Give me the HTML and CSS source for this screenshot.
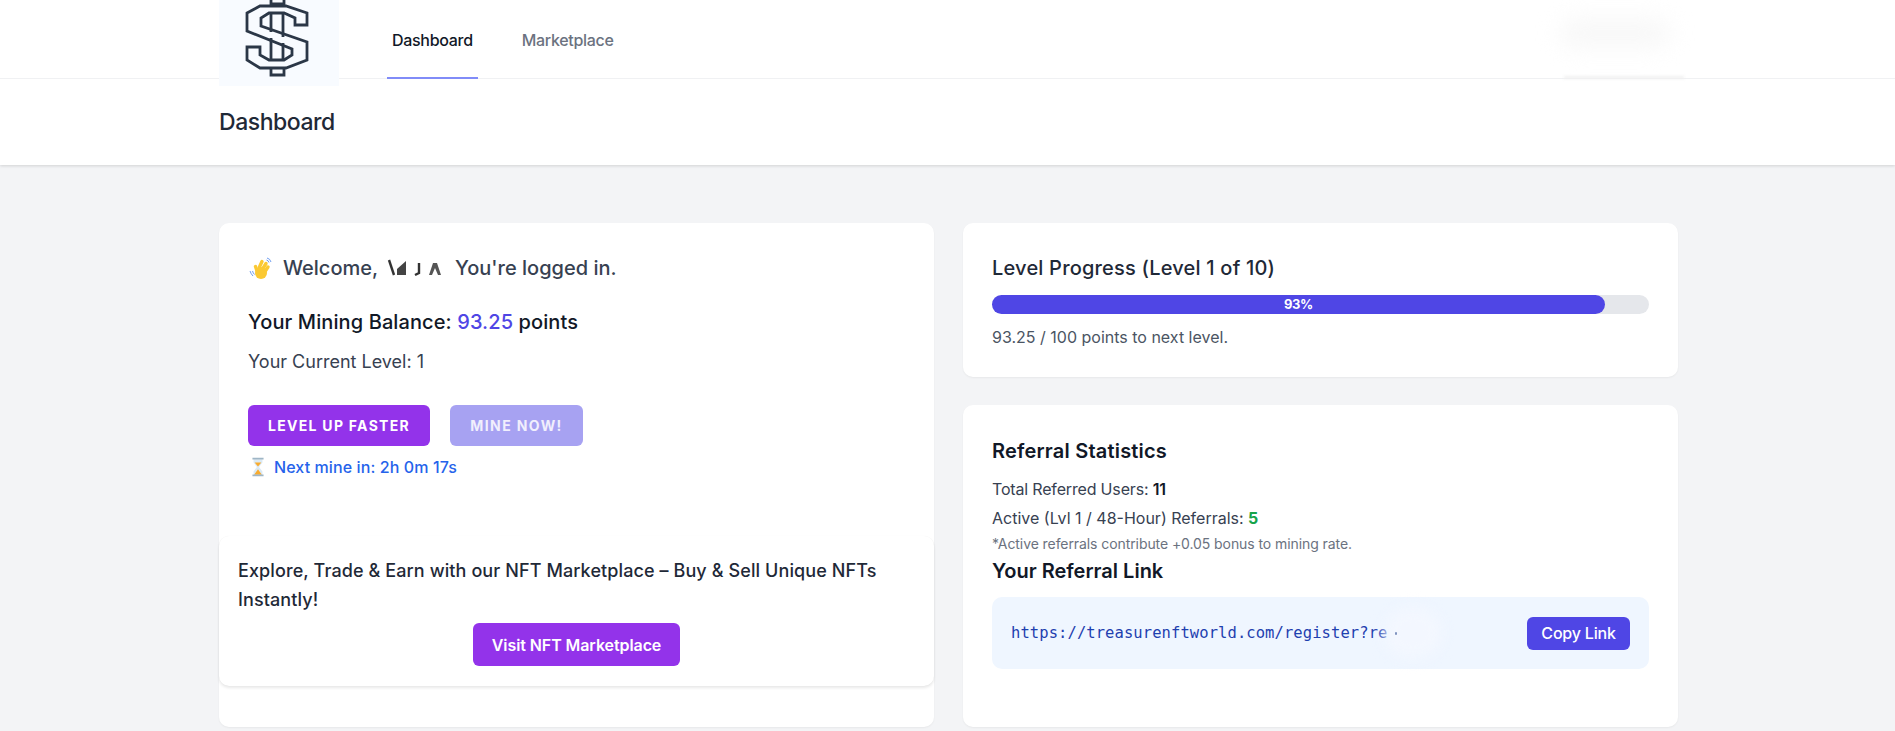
FILE: index.html
```html
<!DOCTYPE html>
<html lang="en">
<head>
<meta charset="utf-8">
<title>Dashboard</title>
<link rel="stylesheet" href="styles.css">
</head>
<body>
<nav class="topnav">
  <div class="container navrow">
    <a class="logo" href="#">
      <svg class="logo-svg" viewBox="0 0 120 86" width="120" height="86">
        <g fill="none" stroke="#2b3747" stroke-width="2.800" stroke-linejoin="miter">
          <path d="M28 13 L41 6 H67 L88 13 V25 H76 V18 L65 13 H50 L42 18 V26 L88 42 V60 L67 68 H41 L28 60 V47 H41 V55 L50 60 H65 L73 55 V49 L28 31 Z"/>
          <path d="M52 13 V32 M64 13 V37 M52 38 V60 M64 43 V60"/>
          <path d="M52 6 V0 M65 6 V0 M52 4 H65 M52 68 V75 H65 V68"/>
        </g>
      </svg>
    </a>
    <div class="navlinks">
      <a class="navlink active" href="#">Dashboard</a>
      <a class="navlink" href="#">Marketplace</a>
    </div>
    <div class="account-blur"></div>
    <div class="account-streak"></div>
  </div>
</nav>
<header class="pagehead">
  <div class="container"><h1>Dashboard</h1></div>
</header>
<main class="content">
  <div class="container grid">
    <section class="card left">
      <div class="left-body">
        <p class="welcome">
          <svg class="wave" viewBox="0 0 24 24" width="24" height="24">
            <path d="M1 15 q1 3 3 5 M3.500 15 q.5 2 2 3.500" fill="none" stroke="#6f9df0" stroke-width="1"/>
            <path d="M18 2 q3 .5 4 4 M17.500 4 q2 .5 2.500 2.500" fill="none" stroke="#6f9df0" stroke-width="1"/>
            <g fill="none" stroke="#fbc933" stroke-linecap="round" stroke-width="3.400">
              <path d="M10 12 L13 5.500"/>
              <path d="M13 14 L17 7.500"/>
              <path d="M15 17 L19 11"/>
              <path d="M8 15 L6.500 10.500"/>
            </g>
            <circle cx="12" cy="17" r="6" fill="#fbc933"/>
          </svg>
          <span>Welcome,</span>
          <svg class="name-mask" viewBox="0 0 62 22" width="62" height="22">
            <path d="M3 3 L8 18" stroke="#333" stroke-width="2.400"/>
            <path d="M11 12 L20 4 V18 H11 Z" fill="#444"/>
            <path d="M33 6 V16 L29 18" stroke="#333" stroke-width="2.400" fill="none"/>
            <path d="M43 18 L47 6 H51 L55 18 H52 L49 11 L46 18 Z" fill="#555"/>
          </svg>
          <span>You're logged in.</span>
        </p>
        <p class="balance">Your Mining Balance: <span class="indigo">93.25</span> points</p>
        <p class="level">Your Current Level: 1</p>
        <div class="actions">
          <a class="btn btn-purple" href="#">LEVEL UP FASTER</a>
          <a class="btn btn-muted" href="#">MINE NOW!</a>
        </div>
        <p class="timer">
          <svg class="glass" viewBox="0 0 14 18" width="16" height="20">
            <path d="M3 2 H11 V5 L8 9 L11 13 V16 H3 V13 L6 9 L3 5 Z" fill="#dbeaf5"/>
            <path d="M4 5 H10 L7 8.500 Z M3.500 16 L7 11 L10.500 16 Z" fill="#f9ab2e"/>
            <path d="M2 1.500 H12 M2 16.500 H12" stroke="#9fb6c6" stroke-width="1.600"/>
          </svg>
          <span>Next mine in: 2h 0m 17s</span>
        </p>
      </div>
      <div class="promo">
        <p class="promo-text">Explore, Trade &amp; Earn with our NFT Marketplace – Buy &amp; Sell Unique NFTs Instantly!</p>
        <a class="promo-btn" href="#">Visit NFT Marketplace</a>
      </div>
    </section>
    <div class="right">
      <section class="card progress-card">
        <h2 class="progress-title">Level Progress (Level 1 of 10)</h2>
        <div class="track"><div class="fill" style="width:93.25%">93%</div></div>
        <p class="progress-note">93.25 / 100 points to next level.</p>
      </section>
      <section class="card referral-card">
        <h3 class="ref-title">Referral Statistics</h3>
        <p class="ref-line first">Total Referred Users: <b>11</b></p>
        <p class="ref-line wide">Active (Lvl 1 / 48-Hour) Referrals: <b class="green">5</b></p>
        <p class="ref-note">*Active referrals contribute +0.05 bonus to mining rate.</p>
        <h3 class="link-title">Your Referral Link</h3>
        <div class="linkbox">
          <code class="link">https://treasurenftworld.com/register?re</code>
          <span class="link-blur"></span>
          <span class="link-dot"></span>
          <button class="copy" type="button">Copy Link</button>
        </div>
      </section>
    </div>
  </div>
</main>
</body>
</html>
```
FILE: styles.css
```css
* { box-sizing: border-box; }
html, body { margin: 0; padding: 0; }
body {
  background: #f3f4f6;
  font-family: "Inter", "Liberation Sans", sans-serif;
  color: #111827;
  overflow: hidden;
  height: 731px;
}
p, h1, h2, h3 { margin: 0; }
a { text-decoration: none; color: inherit; }

.container { width: 1459px; margin-left: 219px; }

.topnav {
  height: 79px;
  background: #fff;
  border-bottom: 1px solid #f0f1f3;
  position: relative;
  z-index: 2;
}
.navrow { display: flex; height: 78px; position: relative; }
.logo { display: block; width: 120px; height: 86px; background: #f8fbff; flex: none; }
.logo-svg { display: block; filter: blur(.35px); }
.navlinks { display: flex; margin-left: 48px; gap: 39px; }
.navlink {
  display: flex;
  align-items: center;
  height: 79px;
  padding: 3px 5px 0;
  border-bottom: 2px solid transparent;
  font-size: 16px;
  font-weight: 500;
  letter-spacing: -.3px;
  color: #6b7280;
}
.navlink.active { color: #111827; border-bottom-color: #818cf8; }
.account-blur {
  position: absolute;
  left: 1341px;
  top: 18px;
  width: 110px;
  height: 30px;
  background: #f8f8f8;
  border-radius: 15px;
  filter: blur(11px);
}
.account-streak {
  position: absolute;
  left: 1345px;
  top: 76px;
  width: 120px;
  height: 3px;
  background: #f0f0f0;
  filter: blur(1.500px);
}

.pagehead {
  height: 86px;
  background: #fff;
  box-shadow: 0 1px 3px rgba(0, 0, 0, .14);
  position: relative;
  z-index: 1;
}
.pagehead .container { height: 86px; display: flex; align-items: center; }
.pagehead h1 { font-size: 23px; font-weight: 500; letter-spacing: -.46px; color: #1f2937; line-height: 32px; }

.content { padding-top: 58px; }
.grid { display: grid; grid-template-columns: 715px 715px; column-gap: 29px; }

.card { background: #fff; border-radius: 10px; box-shadow: 0 1px 2px rgba(0, 0, 0, .05); }
.left { display: flex; flex-direction: column; height: 504px; }
.left-body { padding: 30px 29px 0; height: 313px; }
.welcome { display: flex; align-items: center; height: 30px; font-size: 20px; font-weight: 500; color: #374151; }
.wave { margin: 0 10px 0 1px; flex: none; }
.name-mask { margin: 0 7px 0 8px; flex: none; filter: blur(.6px); }
.balance { margin-top: 24px; font-size: 20px; line-height: 30px; font-weight: 500; letter-spacing: .1px; color: #111827; }
.indigo { color: #4f46e5; }
.level { margin-top: 11px; font-size: 18px; line-height: 28px; color: #374151; }
.actions { display: flex; gap: 20px; margin-top: 29px; }
.btn {
  display: flex;
  align-items: center;
  justify-content: center;
  height: 41px;
  border-radius: 6px;
  font-size: 14px;
  font-weight: 700;
  letter-spacing: 1.300px;
  color: #fff;
}
.btn-purple { width: 182px; background: #9333ea; }
.btn-muted { width: 133px; background: #a7a2f2; color: #f1effd; letter-spacing: 1.400px; }
.timer { display: flex; align-items: center; height: 24px; margin-top: 9px; font-size: 16px; font-weight: 500; letter-spacing: .1px; color: #2563eb; }
.glass { margin: 0 8px 0 2px; flex: none; }

.promo {
  height: 150px;
  padding: 20px 19px;
  background: #fff;
  border-radius: 10px;
  box-shadow: 0 2px 3px rgba(0, 0, 0, .09), 0 0 1px rgba(0, 0, 0, .06);
  display: flex;
  flex-direction: column;
  align-items: center;
}
.promo-text { width: 100%; font-size: 18px; line-height: 29px; font-weight: 500; letter-spacing: .1px; color: #1f2937; }
.promo-btn {
  display: flex;
  align-items: center;
  justify-content: center;
  width: 207px;
  height: 43px;
  margin-top: 9px;
  background: #9333ea;
  border-radius: 6px;
  color: #fff;
  font-size: 16px;
  font-weight: 600;
  letter-spacing: -.08px;
}

.right { display: flex; flex-direction: column; gap: 28px; }
.progress-card { height: 154px; padding: 30px 29px 0; }
.progress-title { font-size: 20px; line-height: 30px; font-weight: 500; letter-spacing: .2px; color: #1f2937; }
.track { height: 19px; margin-top: 12px; background: #e5e7eb; border-radius: 10px; }
.fill {
  height: 19px;
  background: #4f46e5;
  border-radius: 10px;
  color: #fff;
  font-size: 13px;
  font-weight: 700;
  letter-spacing: -.4px;
  line-height: 19px;
  text-align: center;
}
.progress-note { margin-top: 11px; font-size: 16px; line-height: 24px; color: #4b5563; }

.referral-card { height: 322px; padding: 31px 29px 0; }
.ref-title { font-size: 20px; line-height: 30px; font-weight: 600; letter-spacing: .2px; color: #111827; }
.ref-line { margin-top: 5px; font-size: 16px; line-height: 24px; letter-spacing: -.17px; color: #374151; }
.ref-line.first { margin-top: 11px; }
.ref-line.wide { letter-spacing: 0; }
.ref-line b { font-weight: 600; color: #111827; }
.ref-line b.green { color: #16a34a; font-weight: 700; }
.ref-note { margin-top: 4px; font-size: 14px; line-height: 20px; letter-spacing: -.08px; color: #6b7280; }
.link-title { margin-top: 3px; font-size: 20px; line-height: 28px; font-weight: 600; color: #111827; }
.linkbox {
  display: flex;
  align-items: center;
  height: 72px;
  margin-top: 12px;
  padding: 0 19px;
  background: #eff6ff;
  border-radius: 10px;
  position: relative;
}
.link {
  flex: 1;
  font-family: "DejaVu Sans Mono", monospace;
  font-size: 15.500px;
  letter-spacing: .08px;
  color: #1e40af;
}
.link-blur {
  position: absolute;
  left: 392px;
  top: 10px;
  width: 58px;
  height: 52px;
  border-radius: 50%;
  background: #f3f7ff;
  filter: blur(7px);
}
.link-dot {
  position: absolute;
  left: 403px;
  top: 35px;
  width: 2px;
  height: 3px;
  background: #7f93bf;
  border-radius: 1px;
}
.copy {
  width: 103px;
  height: 33px;
  padding: 0;
  border: 0;
  border-radius: 6px;
  background: #4f46e5;
  color: #fff;
  font-family: inherit;
  letter-spacing: -.2px;
  font-size: 16px;
  font-weight: 500;
  position: relative;
}
```
